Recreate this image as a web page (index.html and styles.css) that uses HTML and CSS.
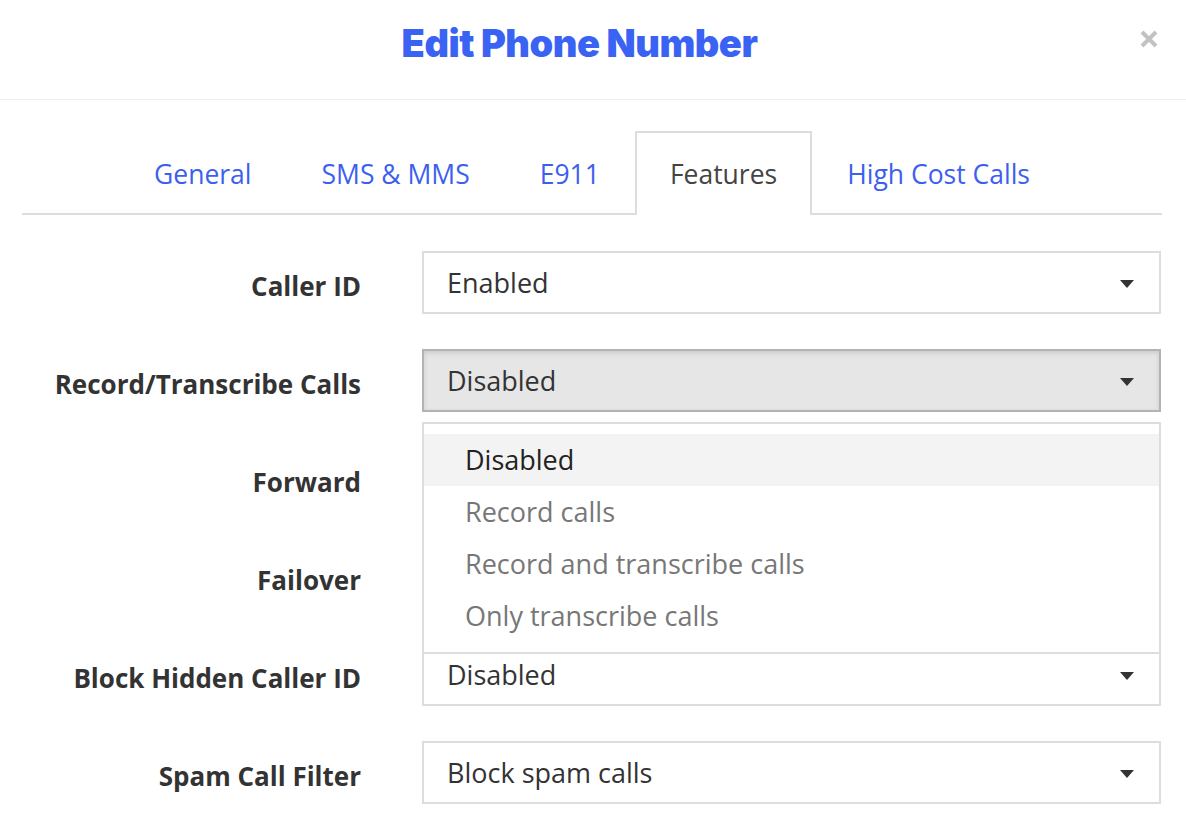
FILE: index.html
```html
<!DOCTYPE html>
<html lang="en">
<head>
    <meta charset="UTF-8">
    <meta name="viewport" content="width=device-width, initial-scale=1.0">
    <title>Edit Phone Number</title>
    <link rel="stylesheet" href="styles.css">
</head>
<body>
<div class="modal">
    <div class="modal-header">
        <h1>Edit Phone Number</h1>
        <button class="close" type="button" aria-label="Close">
            <svg width="18" height="18" viewBox="0 0 18 18"><path d="M2 2 L16 16 M16 2 L2 16" stroke="#c2c2c2" stroke-width="4"/></svg>
        </button>
    </div>

    <ul class="tabs">
        <li><a href="#">General</a></li>
        <li><a href="#">SMS &amp; MMS</a></li>
        <li><a href="#">E911</a></li>
        <li class="active"><a href="#">Features</a></li>
        <li><a href="#">High Cost Calls</a></li>
    </ul>

    <form class="features">
        <label>Caller ID</label>
        <div class="select"><span>Enabled</span><i class="caret"></i></div>

        <label>Record/Transcribe Calls</label>
        <div class="select-wrap">
            <div class="select open"><span>Disabled</span><i class="caret"></i></div>
            <ul class="menu">
                <li class="current">Disabled</li>
                <li>Record calls</li>
                <li>Record and transcribe calls</li>
                <li>Only transcribe calls</li>
            </ul>
        </div>

        <!-- these two sit under the open menu -->
        <label>Forward</label>
        <div class="select covered"><span>Disabled</span><i class="caret"></i></div>

        <label>Failover</label>
        <div class="select covered"><span>Disabled</span><i class="caret"></i></div>

        <label>Block Hidden Caller ID</label>
        <div class="select"><span>Disabled</span><i class="caret"></i></div>

        <label>Spam Call Filter</label>
        <div class="select"><span>Block spam calls</span><i class="caret"></i></div>
    </form>
</div>
</body>
</html>
```

FILE: styles.css
```css
body {
    font-family: "Open Sans", Roboto, sans-serif;
    background: #fff;
    margin: 0;
    padding: 0;
    color: #333;
}
.modal {
    width: 1186px;
}
.modal-header {
    position: relative;
    height: 99px;
    border-bottom: 1px solid #eee;
    display: flex;
    align-items: center;
    justify-content: center;
}
.modal-header h1 {
    margin: 0 27px 14px 0;
    font-family: Inter, "DejaVu Sans", sans-serif;
    font-weight: 900;
    font-size: 38px;
    letter-spacing: -0.5px;
    color: #3a63f3;
}
.close {
    position: absolute;
    right: 28px;
    top: 30px;
    background: none;
    border: none;
    padding: 0;
    cursor: pointer;
}
.tabs {
    list-style: none;
    margin: 31px 24px 0 22px;
    padding: 0;
    display: flex;
    justify-content: center;
    border-bottom: 2px solid #ddd;
}
.tabs li {
    margin-bottom: -2px;
    border: 2px solid transparent;
    border-bottom: none;
}
.tabs a {
    display: block;
    padding: 0 33px;
    height: 80px;
    line-height: 82px;
    font-size: 26.5px;
    color: #3d5ff0;
    text-decoration: none;
}
.tabs li.active {
    border-color: #ddd;
    background: #fff;
    height: 82px;
}
.tabs li.active a {
    color: #444;
}
.features {
    display: grid;
    grid-template-columns: 339px 739px;
    column-gap: 61px;
    row-gap: 35px;
    padding: 36px 0 0 22px;
    align-items: center;
}
.features label {
    text-align: right;
    font-weight: bold;
    font-size: 26px;
    padding-top: 6px;
    color: #333;
}
.select-wrap {
    position: relative;
    z-index: 2;
}
.select {
    position: relative;
    box-sizing: border-box;
    height: 63px;
    border: 2px solid #ddd;
    background: #fff;
    padding-left: 23px;
    display: flex;
    align-items: center;
    font-size: 27px;
    color: #333;
}
.select.covered span {
    visibility: hidden;
}
.select.open {
    background: #e6e6e6;
    border-color: #b3b3b3;
    box-shadow: inset 0 2px 5px rgba(0, 0, 0, 0.12);
}
.caret {
    position: absolute;
    right: 25px;
    top: 27px;
    width: 0;
    height: 0;
    border-left: 7px solid transparent;
    border-right: 7px solid transparent;
    border-top: 8px solid #333;
}
.menu {
    position: absolute;
    left: 0;
    right: 0;
    top: 73px;
    list-style: none;
    margin: 0;
    padding: 10px 0 10px;
    background: #fff;
    border: 2px solid #ddd;
}
.menu li {
    height: 52px;
    line-height: 52px;
    padding-left: 41px;
    font-size: 27px;
    color: #777;
}
.menu li.current {
    background: #f3f3f3;
    color: #222;
}
```
